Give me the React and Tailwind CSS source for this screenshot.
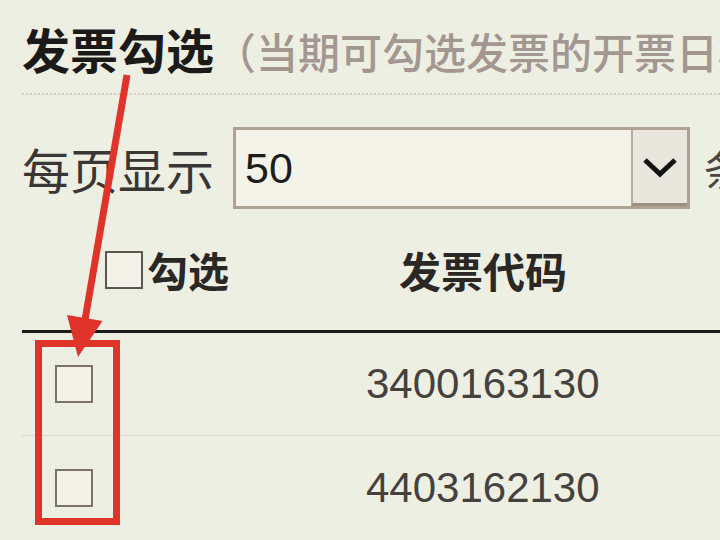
import React from "react";

const rows = ["3400163130", "4403162130"];

function Box({ className }) {
  return <span className={"block shrink-0 w-[38px] h-[38px] border-2 bg-[#f3f2e9] " + className} />;
}

export default function App() {
  return (
    <div className="relative w-[720px] h-[540px] overflow-hidden bg-[#eeefe3] font-['Noto_Sans_CJK_SC',sans-serif]">
      <div className="pl-[22px] pt-[20px]">
        {/* title */}
        <div className="flex items-end whitespace-nowrap h-[52px]">
          <span className="shrink-0 text-[48px] leading-none font-bold text-[#1c1a18]">发票勾选</span>
          <span className="shrink-0 text-[42px] leading-none font-medium text-[#a39791]">（当期可勾选发票的开票日期</span>
        </div>
        <div className="mt-[21px] border-t-2 border-dotted border-[#d8cec1]" />

        {/* page size */}
        <div className="mt-[32px] flex items-center whitespace-nowrap">
          <span className="shrink-0 text-[48px] leading-none text-[#3a3633]">每页显示</span>
          <div className="shrink-0 ml-[19px] w-[457px] h-[82px] flex border-[3px] border-[#aea290] bg-[#f3f3ea]">
            <span className="flex-1 flex items-center pl-[9px] font-['Liberation_Sans',sans-serif] text-[43px] text-[#1e1c1a]">
              50
            </span>
            <span className="w-[56px] flex items-center justify-center bg-[#e9e6de] border-l-2 border-[#b8ad9e] border-b-[3px] border-b-[#9a8f80]">
              <svg width="36" height="22" viewBox="0 0 36 22">
                <path d="M3 4 L18 18 L33 4" fill="none" stroke="#141414" strokeWidth="5" strokeLinejoin="miter" />
              </svg>
            </span>
          </div>
          <span className="shrink-0 ml-[14px] text-[42px] leading-none text-[#4a4540]">条</span>
        </div>

        {/* header */}
        <div className="h-[121px] flex items-center whitespace-nowrap">
          <Box className="ml-[83px] border-[#5d5650]" />
          <span className="ml-[4px] text-[41px] leading-none font-bold text-[#2a2725]">勾选</span>
          <span className="ml-[170px] text-[42px] leading-none font-bold text-[#2a2725]">发票代码</span>
        </div>
        <div className="h-[3px] bg-[#1d1b19]" />

        {/* rows */}
        {rows.map((code, i) => (
          <div
            key={code}
            className={
              "h-[103px] flex items-center " + (i === 0 ? "border-b border-[#ddd6c9]" : "")
            }
          >
            <Box className="ml-[33px] border-[#7c726a]" />
            <span className="ml-[273px] font-['Liberation_Sans',sans-serif] text-[42px] leading-none text-[#45413d]">
              {code}
            </span>
          </div>
        ))}
      </div>

      {/* annotation */}
      <svg className="absolute inset-0 pointer-events-none" width="720" height="540" viewBox="0 0 720 540">
        <rect x="38.5" y="343.5" width="78" height="178" fill="none" stroke="#e0342b" strokeWidth="7" />
        <line x1="127" y1="75" x2="85" y2="320" stroke="#e0342b" strokeWidth="7" />
        <polygon points="78,357 102.5,321 67,315" fill="#e0342b" />
      </svg>
    </div>
  );
}
